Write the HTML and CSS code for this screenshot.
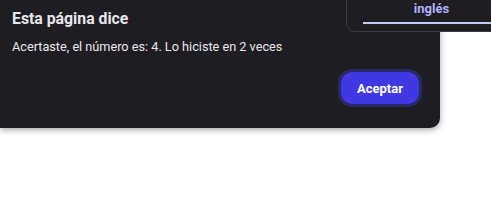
FILE: index.html
```html
<!DOCTYPE html>
<html>
<head>
<meta charset="utf-8">
<link rel="stylesheet" href="styles.css">
</head>
<body>
<div class="dialog">
  <h1 class="title">Esta página dice</h1>
  <p class="message">Acertaste, el número es: 4. Lo hiciste en 2 veces</p>
  <div class="actions">
    <button class="accept">Aceptar</button>
  </div>
</div>
<div class="lang-panel">
  <div class="lang-tab">
    <span class="lang">inglés</span>
    <div class="lang-bar"></div>
  </div>
</div>
</body>
</html>
```
FILE: styles.css
```css
html, body {
  margin: 0;
  padding: 0;
  background: #ffffff;
}
body {
  width: 491px;
  height: 200px;
  overflow: hidden;
  position: relative;
  font-family: Roboto, "Noto Sans", sans-serif;
}
.dialog {
  width: 440px;
  height: 128px;
  box-sizing: border-box;
  background: #1e1d22;
  border-bottom-right-radius: 10px;
  box-shadow: 0 2px 6px rgba(0, 0, 0, 0.35);
  padding: 9px 21px 0 12px;
  display: flex;
  flex-direction: column;
}
.title {
  margin: 0;
  font-size: 15.8px;
  font-weight: 700;
  color: #e8e6ee;
  line-height: 20px;
}
.message {
  margin: 9px 0 0;
  font-size: 12.7px;
  color: #e8e6ee;
  line-height: 18px;
}
.actions {
  display: flex;
  justify-content: flex-end;
  margin-top: 16px;
}
.accept {
  width: 78px;
  height: 32px;
  border: none;
  border-radius: 11px;
  background: #4038e2;
  color: #ffffff;
  font-family: inherit;
  font-size: 13px;
  font-weight: 700;
  outline: 3px solid #2a2966;
  outline-offset: 0;
  padding: 0;
}
.lang-panel {
  position: absolute;
  top: -10px;
  left: 346px;
  width: 160px;
  height: 42px;
  box-sizing: border-box;
  background: #1e1d22;
  border: 1px solid #3c3b41;
  border-radius: 9px;
  padding-left: 16px;
}
.lang-tab {
  width: 137px;
  display: flex;
  flex-direction: column;
  align-items: stretch;
  text-align: center;
}
.lang {
  margin-top: 10px;
  font-size: 13px;
  font-weight: 700;
  color: #b0b0fc;
  line-height: 16px;
}
.lang-bar {
  margin-top: 5px;
  height: 2px;
  background: #c8c8fc;
}
```
